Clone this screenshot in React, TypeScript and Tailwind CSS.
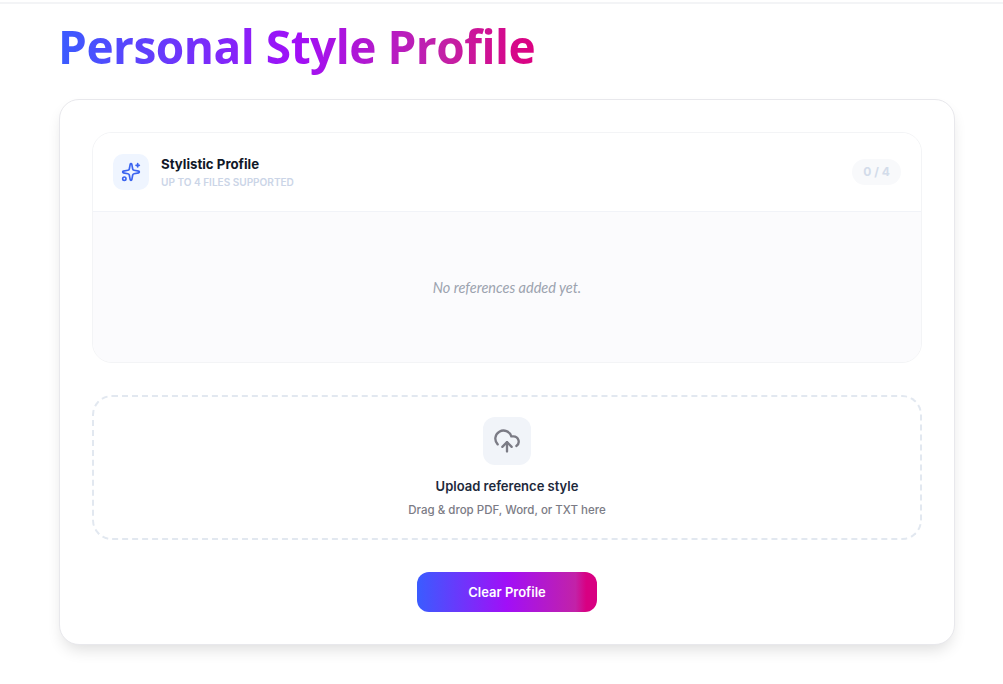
import { CloudUpload, Sparkles } from "lucide-react";

export default function App() {
  return (
    <div className="min-h-[684px] bg-white font-['Open_Sans','Liberation_Sans',sans-serif] overflow-hidden">
      <div className="h-[4px] border-b-2 border-[#f3f4f6]" />
      <div className="pl-[59px] w-[955px]">
        <h1 className="mt-[12px] -ml-px h-[60px] leading-[60px] text-[46px] font-bold tracking-[-0.5px] w-[478px] whitespace-nowrap text-transparent bg-clip-text bg-[linear-gradient(90deg,#3a5cff,#a10ff7_50%,#c222a8_80%,#dc0080)]">
          Personal Style Profile
        </h1>

        <div className="mt-[23px] h-[546px] rounded-[20px] border border-[#e8e8ec] bg-white px-[32px] pt-[32px] shadow-[0_8px_16px_-4px_rgba(0,0,0,0.14)]">
          <div className="h-[231px] rounded-[20px] border border-[#f3f4f6] overflow-hidden flex flex-col">
            <div className="h-[79px] shrink-0 border-b border-[#f1f3f8] bg-white flex items-center pl-[20px] pr-[20px]">
              <div className="w-[36px] h-[36px] rounded-[10px] bg-[#eff5ff] flex items-center justify-center text-[#3b64f0]">
                <Sparkles size={20} strokeWidth={2} />
              </div>
              <div className="ml-[12px] flex-1">
                <div className="text-[13.25px] leading-[18px] font-bold text-[#111827] font-['Inter',sans-serif]">Stylistic Profile</div>
                <div className="text-[10.05px] leading-[14px] font-semibold text-[#cbd5e7] font-['Inter',sans-serif] mt-[2px] uppercase">Up to 4 files supported</div>
              </div>
              <div className="h-[26px] w-[49px] rounded-full bg-[#f8f9fb] flex items-center justify-center text-[12px] font-bold text-[#d3dcea] font-['Inter',sans-serif]">0 / 4</div>
            </div>
            <div className="flex-1 bg-[#fbfbfd] flex items-center justify-center pt-[2px]">
              <p className="italic text-[14.5px] text-[#9ca3af] font-['Lato',sans-serif]">No references added yet.</p>
            </div>
          </div>

          <div className="mt-[32px] h-[145px] rounded-[20px] border-2 border-dashed border-[#e2e8f0] flex flex-col items-center pt-[20px]">
            <div className="w-[48px] h-[48px] rounded-[12px] bg-[#f1f4f9] flex items-center justify-center text-[#7b7b85]">
              <CloudUpload size={28} strokeWidth={2} />
            </div>
            <div className="mt-[11px] text-[13px] leading-[20px] font-semibold text-[#1e293b] font-['Inter',sans-serif]">Upload reference style</div>
            <div className="mt-[6px] text-[11.5px] leading-[16px] font-medium text-[#7b7b85] font-['Inter',sans-serif]">Drag &amp; drop PDF, Word, or TXT here</div>
          </div>

          <div className="mt-[32px] flex justify-center">
            <button className="w-[180px] h-[40px] pt-px rounded-[12px] text-white text-[13px] font-semibold font-['Inter',sans-serif] bg-[linear-gradient(90deg,#3a5cff,#a10ff7_50%,#c222a8_88%,#d80082_94%)]">
              Clear Profile
            </button>
          </div>
        </div>
      </div>
    </div>
  );
}
